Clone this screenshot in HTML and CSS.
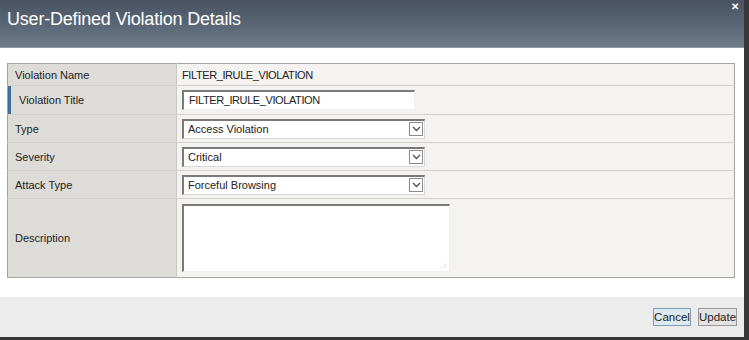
FILE: index.html
```html
<!DOCTYPE html>
<html>
  <head>
    <title>User-Defined Violation Details</title>
    <link rel="stylesheet" href="styles.css">
  </head>
  <body>
    <!-- 對話框 -->
    <div class="dialog">
      <div class="dialog-header">
        <h1 class="dialog-title">User-Defined Violation Details</h1>
        <span class="dialog-close">&#x2715;</span>
      </div>

      <div class="dialog-body">
        <table class="details">
          <colgroup>
            <col class="col-label">
            <col>
          </colgroup>
          <tr class="first">
            <td class="label">Violation Name</td>
            <td class="value"><span class="caps">FILTER_IRULE_VIOLATION</span></td>
          </tr>
          <tr class="active">
            <td class="label">Violation Title</td>
            <td class="value"><div class="field text-field"><span class="caps">FILTER_IRULE_VIOLATION</span></div></td>
          </tr>
          <tr>
            <td class="label">Type</td>
            <td class="value">
              <div class="field select-field">
                <span>Access Violation</span>
                <span class="select-arrow"><svg width="9" height="6" viewBox="0 0 9 6"><path d="M1 1l3.5 3.5L8 1" fill="none" stroke="#555" stroke-width="1.4"/></svg></span>
              </div>
            </td>
          </tr>
          <tr>
            <td class="label">Severity</td>
            <td class="value">
              <div class="field select-field">
                <span>Critical</span>
                <span class="select-arrow"><svg width="9" height="6" viewBox="0 0 9 6"><path d="M1 1l3.5 3.5L8 1" fill="none" stroke="#555" stroke-width="1.4"/></svg></span>
              </div>
            </td>
          </tr>
          <tr>
            <td class="label">Attack Type</td>
            <td class="value">
              <div class="field select-field">
                <span>Forceful Browsing</span>
                <span class="select-arrow"><svg width="9" height="6" viewBox="0 0 9 6"><path d="M1 1l3.5 3.5L8 1" fill="none" stroke="#555" stroke-width="1.4"/></svg></span>
              </div>
            </td>
          </tr>
          <tr class="tall">
            <td class="label">Description</td>
            <td class="value">
              <div class="field text-area">
                <svg class="grip" width="5" height="5" viewBox="0 0 5 5"><circle cx="4" cy="1" r="0.5" fill="#aaa"/><circle cx="4" cy="4" r="0.5" fill="#aaa"/><circle cx="1" cy="4" r="0.5" fill="#aaa"/><circle cx="4" cy="2.5" r="0.5" fill="#ccc"/></svg>
              </div>
            </td>
          </tr>
        </table>
      </div>

      <div class="dialog-footer">
        <button class="btn btn-focus">Cancel</button>
        <button class="btn">Update</button>
      </div>
    </div>
  </body>
</html>
```

FILE: styles.css
```css
/* 對話框整體 */
body {
  margin: 0;
  background-color: #393939;
  font-family: "Liberation Sans", Arial, sans-serif;
}

.dialog {
  width: 744px;
  height: 337px;
  background-color: #fff;
  display: flex;
  flex-direction: column;
}

/* 標題列 */
.dialog-header {
  height: 48px;
  flex-shrink: 0;
  display: flex;
  align-items: flex-start;
  justify-content: space-between;
  background: linear-gradient(to bottom, #485262 0%, #5b6776 55%, #6f7c89 100%);
  border-bottom: 1px solid #8e99a3;
  box-sizing: border-box;
}

.dialog-title {
  margin: 0;
  padding: 9px 0 0 7px;
  font-size: 18px;
  font-weight: normal;
  color: #fff;
  letter-spacing: -0.2px;
}

.dialog-close {
  padding: 1px 5px 0 0;
  color: #fff;
  font-size: 10px;
  font-weight: bold;
}

/* 內容 */
.dialog-body {
  padding: 15px 9px 0 7px;
}

.details {
  width: 728px;
  table-layout: fixed;
  border-collapse: collapse;
  border: 1px solid #a3a3a3;
  font-size: 11px;
  color: #222;
}

.col-label {
  width: 169px;
}

.details td {
  border-bottom: 1px solid #d0d0cc;
  padding: 0;
  height: 27px;
}

.details .first td {
  height: 21px;
}

.details .active td {
  height: 28px;
}

.details .label {
  padding-left: 7px;
  background-color: #dddcd8;
  border-right: 1px solid #c8c8c4;
}

.details .active .label {
  box-shadow: inset 3px 0 0 #3f6e9e;
  padding-left: 11px;
}

.details .value {
  padding-left: 5px;
  background-color: #f4f3f1;
}

.details .tall td {
  height: 78px;
  border-bottom: none;
}

.caps {
  letter-spacing: -0.4px;
}

/* 輸入欄位 */
.field {
  box-sizing: border-box;
  background-color: #fff;
  border-top: 2px solid #7a7a7a;
  border-left: 2px solid #7a7a7a;
  border-right: 1px solid #f0f0f0;
  border-bottom: 1px solid #f0f0f0;
}

.text-field {
  width: 233px;
  height: 20px;
  line-height: 17px;
  padding-left: 5px;
}

.select-field {
  width: 243px;
  height: 20px;
  display: flex;
  align-items: center;
  justify-content: space-between;
  padding-left: 4px;
  border-right: 1px solid #d8d8d8;
  border-bottom: 1px solid #d8d8d8;
}

.select-arrow {
  width: 14px;
  height: 14px;
  margin-right: 1px;
  box-sizing: border-box;
  border: 1px solid #8c8c8c;
  background-color: #fff;
  display: flex;
  align-items: center;
  justify-content: center;
}

.text-area {
  width: 268px;
  height: 68px;
  display: flex;
  align-items: flex-end;
  justify-content: flex-end;
  padding: 0 3px 3px 0;
}

/* 底部按鈕 */
.dialog-footer {
  margin-top: auto;
  height: 40px;
  background-color: #ececec;
  display: flex;
  justify-content: flex-end;
  align-items: center;
  gap: 7px;
  padding-right: 7px;
  box-sizing: border-box;
}

.btn {
  font-family: "Liberation Sans", Arial, sans-serif;
  font-size: 11.5px;
  color: #222;
  width: 39px;
  height: 18px;
  padding: 0;
  background-color: #e3e3e3;
  border: 1px solid #9a9a9a;
}

.btn-focus {
  width: 38px;
  background-color: #dce9f0;
  border-color: #7f9db0;
}
```
